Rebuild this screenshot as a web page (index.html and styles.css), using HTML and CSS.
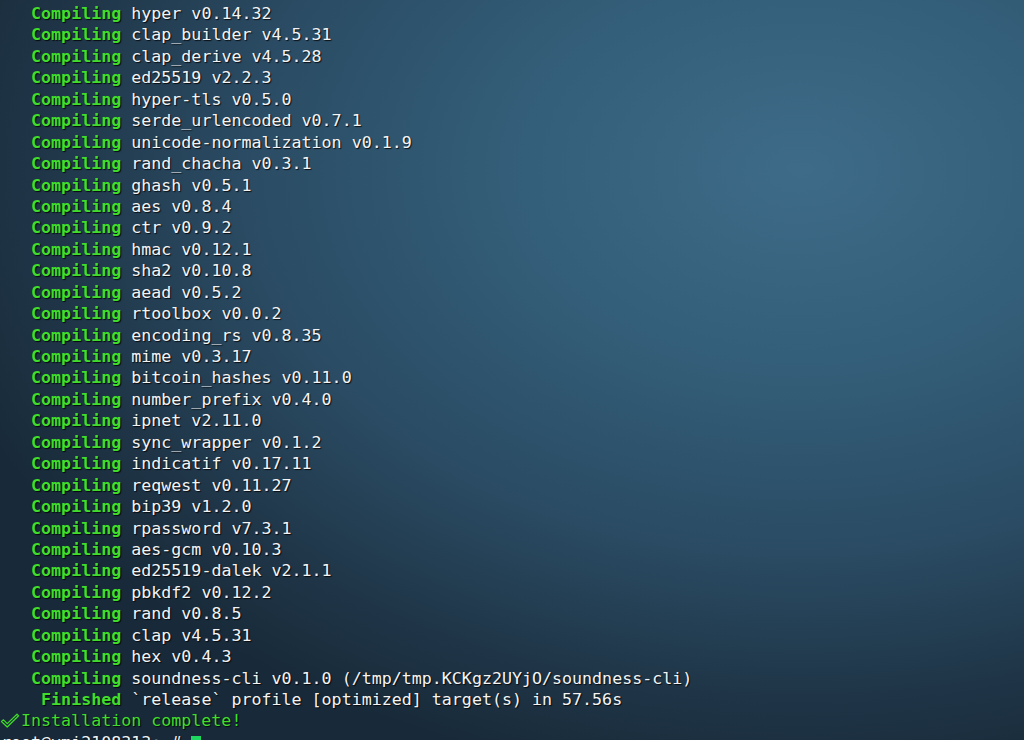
FILE: index.html
```html
<!DOCTYPE html>
<html>
<head>
<meta charset="utf-8">
<link rel="stylesheet" href="styles.css">
</head>
<body>
<main class="term">
<div class="line">   <b class="g">Compiling</b> hyper v0.14.32</div>
<div class="line">   <b class="g">Compiling</b> clap_builder v4.5.31</div>
<div class="line">   <b class="g">Compiling</b> clap_derive v4.5.28</div>
<div class="line">   <b class="g">Compiling</b> ed25519 v2.2.3</div>
<div class="line">   <b class="g">Compiling</b> hyper-tls v0.5.0</div>
<div class="line">   <b class="g">Compiling</b> serde_urlencoded v0.7.1</div>
<div class="line">   <b class="g">Compiling</b> unicode-normalization v0.1.9</div>
<div class="line">   <b class="g">Compiling</b> rand_chacha v0.3.1</div>
<div class="line">   <b class="g">Compiling</b> ghash v0.5.1</div>
<div class="line">   <b class="g">Compiling</b> aes v0.8.4</div>
<div class="line">   <b class="g">Compiling</b> ctr v0.9.2</div>
<div class="line">   <b class="g">Compiling</b> hmac v0.12.1</div>
<div class="line">   <b class="g">Compiling</b> sha2 v0.10.8</div>
<div class="line">   <b class="g">Compiling</b> aead v0.5.2</div>
<div class="line">   <b class="g">Compiling</b> rtoolbox v0.0.2</div>
<div class="line">   <b class="g">Compiling</b> encoding_rs v0.8.35</div>
<div class="line">   <b class="g">Compiling</b> mime v0.3.17</div>
<div class="line">   <b class="g">Compiling</b> bitcoin_hashes v0.11.0</div>
<div class="line">   <b class="g">Compiling</b> number_prefix v0.4.0</div>
<div class="line">   <b class="g">Compiling</b> ipnet v2.11.0</div>
<div class="line">   <b class="g">Compiling</b> sync_wrapper v0.1.2</div>
<div class="line">   <b class="g">Compiling</b> indicatif v0.17.11</div>
<div class="line">   <b class="g">Compiling</b> reqwest v0.11.27</div>
<div class="line">   <b class="g">Compiling</b> bip39 v1.2.0</div>
<div class="line">   <b class="g">Compiling</b> rpassword v7.3.1</div>
<div class="line">   <b class="g">Compiling</b> aes-gcm v0.10.3</div>
<div class="line">   <b class="g">Compiling</b> ed25519-dalek v2.1.1</div>
<div class="line">   <b class="g">Compiling</b> pbkdf2 v0.12.2</div>
<div class="line">   <b class="g">Compiling</b> rand v0.8.5</div>
<div class="line">   <b class="g">Compiling</b> clap v4.5.31</div>
<div class="line">   <b class="g">Compiling</b> hex v0.4.3</div>
<div class="line">   <b class="g">Compiling</b> soundness-cli v0.1.0 (/tmp/tmp.KCKgz2UYjO/soundness-cli)</div>
<div class="line">    <b class="g">Finished</b> `release` profile [optimized] target(s) in 57.56s</div>
<div class="line ok"><svg class="check" width="20" height="16" viewBox="0 0 20 16"><path d="M1.5 8.5 L3.5 6.8 L7.2 10.6 L17 1.2 L18.6 2.8 L7.2 14 Z" fill="none" stroke="#40de2b" stroke-width="1.2" stroke-linejoin="round"/></svg><span class="gr">Installation complete!</span></div>
<div class="line">root@vmi2108313:~# <span class="cursor"> </span></div>
</main>
</body>
</html>
```
FILE: styles.css
```css
html, body {
  margin: 0;
  padding: 0;
  width: 1024px;
  height: 740px;
  overflow: hidden;
}
body {
  background:
    radial-gradient(ellipse 900px 620px at 800px 170px, #3e6b88 0%, #345f7a 30%, #2a4b63 62%, #1f3547 85%, #182a39 100%);
  background-color: #1a2c3b;
}
.term {
  padding: 3px 0 0 1px;
  font-family: "DejaVu Sans Mono", monospace;
  font-size: 16.65px;
  line-height: 21.45px;
  color: #f4f4f4;
  text-shadow: 1px 1px 1px rgba(0, 0, 0, 0.8);
}
.line {
  white-space: pre;
  height: 21.45px;
}
.g {
  color: #40de2b;
  font-weight: bold;
}
.gr {
  color: #40de2b;
}
.ok {
  display: flex;
  align-items: center;
  margin-left: -1px;
}
.check {
  width: 20px;
  height: 16px;
  margin-right: 1px;
  flex: none;
}
.cursor {
  display: inline-block;
  width: 10px;
  height: 19px;
  background: #1ed760;
  vertical-align: -4px;
  text-shadow: none;
}
```
